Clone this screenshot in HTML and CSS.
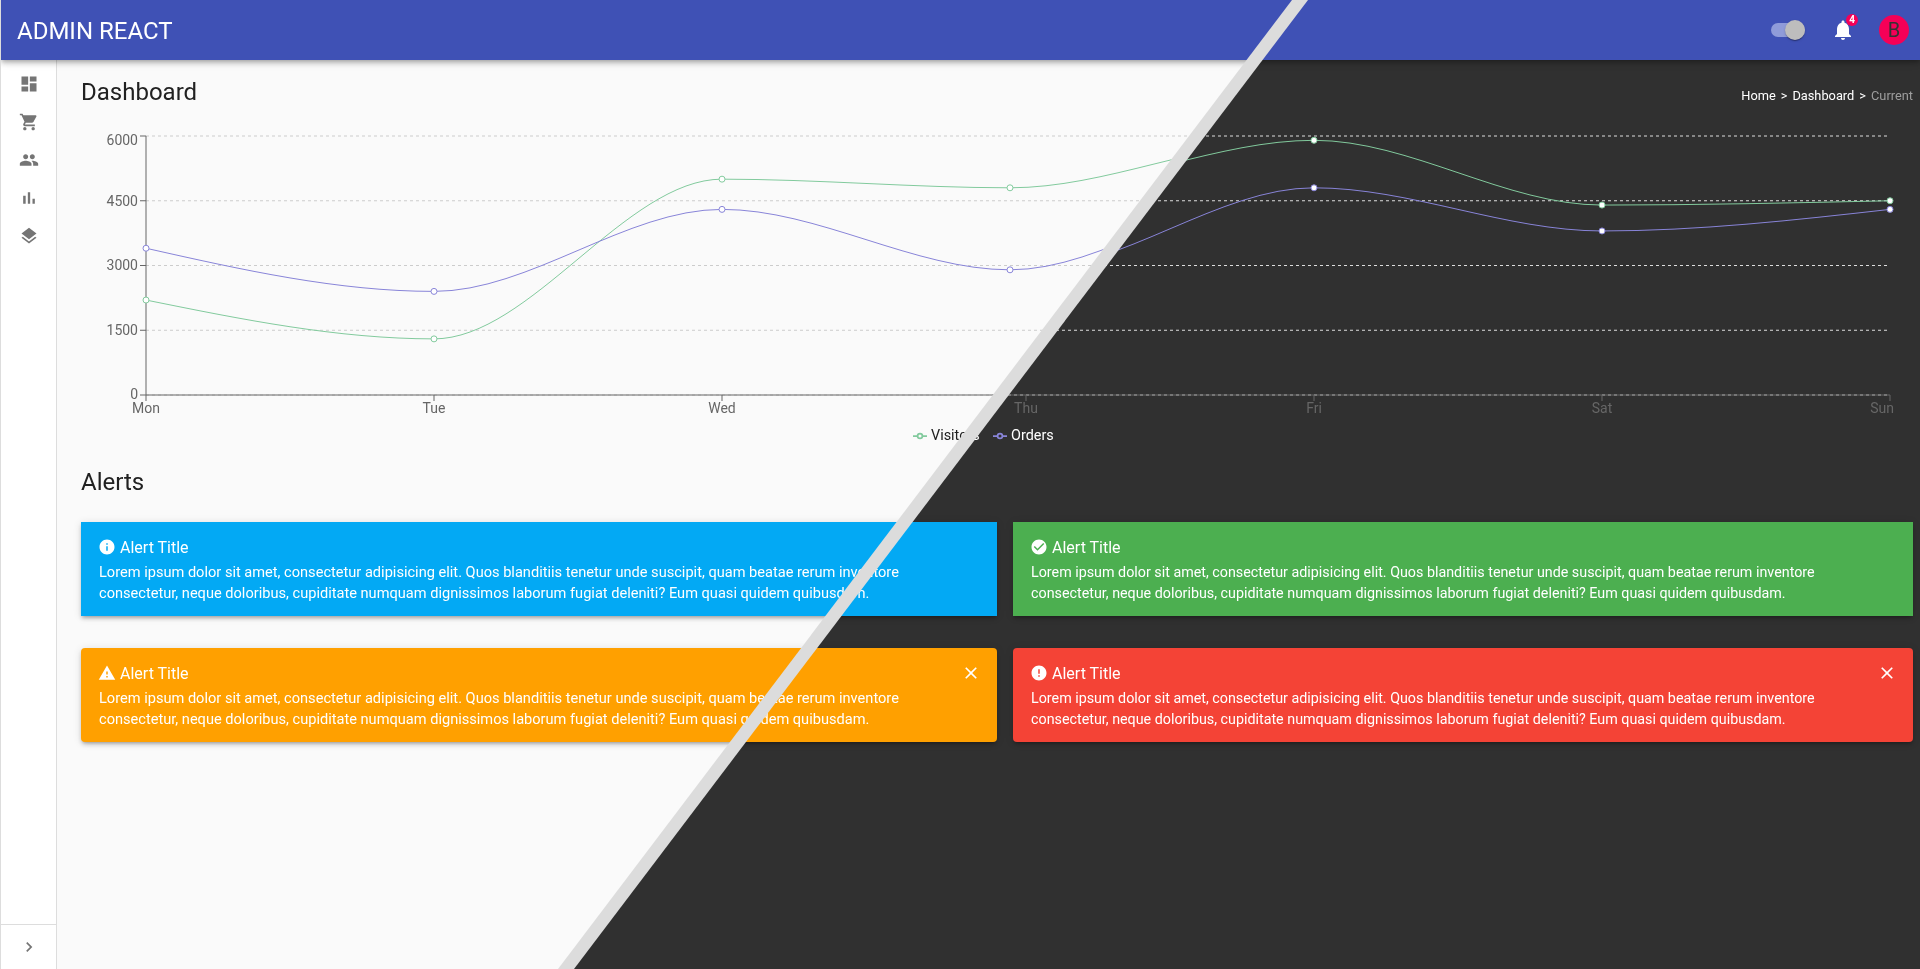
FILE: index.html
```html
<!DOCTYPE html>
<html lang="en">
<head>
  <meta charset="UTF-8" />
  <meta name="viewport" content="width=device-width, initial-scale=1.0" />
  <title>Admin React</title>
  <link rel="stylesheet" href="styles.css">
</head>
<body>
  <div class="app">
    <header class="topbar">
      <div class="brand">ADMIN REACT</div>
      <div class="topbar-actions">
        <div class="theme-switch"><span class="switch-track"></span><span class="switch-thumb"></span></div>
        <div class="bell">
          <svg class="icon-24" viewBox="0 0 24 24"><path d="M12 22c1.1 0 2-.9 2-2h-4c0 1.1.89 2 2 2zm6-6v-5c0-3.07-1.64-5.64-4.5-6.32V4c0-.83-.67-1.5-1.5-1.5s-1.5.67-1.5 1.5v.68C7.63 5.36 6 7.92 6 11v5l-2 2v1h16v-1l-2-2z"/></svg>
          <span class="bell-badge">4</span>
        </div>
        <div class="avatar">B</div>
      </div>
    </header>

    <nav class="sidebar">
      <ul class="side-menu">
        <li><svg class="icon-20" viewBox="0 0 24 24"><path d="M3 13h8V3H3v10zm0 8h8v-6H3v6zm10 0h8V11h-8v10zm0-18v6h8V3h-8z"/></svg></li>
        <li><svg class="icon-20" viewBox="0 0 24 24"><path d="M7 18c-1.1 0-1.99.9-1.99 2S5.9 22 7 22s2-.9 2-2-.9-2-2-2zM1 2v2h2l3.6 7.59-1.35 2.45c-.16.28-.25.61-.25.96 0 1.1.9 2 2 2h12v-2H7.42c-.14 0-.25-.11-.25-.25l.03-.12.9-1.63h7.45c.75 0 1.41-.41 1.75-1.03l3.58-6.49c.08-.14.12-.31.12-.48 0-.55-.45-1-1-1H5.21l-.94-2H1zm16 16c-1.1 0-1.99.9-1.99 2s.89 2 1.99 2 2-.9 2-2-.9-2-2-2z"/></svg></li>
        <li><svg class="icon-20" viewBox="0 0 24 24"><path d="M16 11c1.66 0 2.99-1.34 2.99-3S17.66 5 16 5c-1.66 0-3 1.34-3 3s1.34 3 3 3zm-8 0c1.66 0 2.99-1.34 2.99-3S9.66 5 8 5C6.34 5 5 6.34 5 8s1.34 3 3 3zm0 2c-2.33 0-7 1.17-7 3.5V19h14v-2.5c0-2.33-4.67-3.5-7-3.5zm8 0c-.29 0-.62.02-.97.05 1.16.84 1.97 1.97 1.97 3.45V19h6v-2.5c0-2.33-4.67-3.5-7-3.5z"/></svg></li>
        <li><svg class="icon-20" viewBox="0 0 24 24"><path d="M5 9.2h3V19H5zM10.6 5h2.8v14h-2.8zm5.6 8H19v6h-2.8z"/></svg></li>
        <li><svg class="icon-20" viewBox="0 0 24 24"><path d="M11.99 18.54l-7.37-5.73L3 14.07l9 7 9-7-1.63-1.27-7.38 5.74zM12 16l7.36-5.73L21 9l-9-7-9 7 1.63 1.27L12 16z"/></svg></li>
      </ul>
      <div class="side-footer">
        <svg class="icon-20" viewBox="0 0 24 24"><path d="M10 6L8.59 7.41 13.17 12l-4.58 4.59L10 18l6-6z"/></svg>
      </div>
    </nav>

    <main class="content">
      <div class="page-head">
        <h2 class="section-title">Dashboard</h2>
        <div class="breadcrumbs">
          <span>Home</span><span class="crumb-sep">&gt;</span><span>Dashboard</span><span class="crumb-sep">&gt;</span><span class="crumb-current">Current</span>
        </div>
      </div>

      <svg id="chart" class="chart" viewBox="81 120 1832 340">
        <defs>
          <clipPath id="clipLight"><polygon points="0,0 1300,0 566,969 0,969"/></clipPath>
          <clipPath id="clipDark"><polygon points="1300,0 1920,0 1920,969 566,969"/></clipPath>
        </defs>
      </svg>

      <h2 class="section-title alerts-title">Alerts</h2>
      <div class="alert-grid">
        <div class="alert alert-info square">
          <div class="alert-title">
            <svg class="icon-18" viewBox="0 0 24 24"><path d="M12 2C6.48 2 2 6.48 2 12s4.48 10 10 10 10-4.48 10-10S17.52 2 12 2zm1 15h-2v-6h2v6zm0-8h-2V7h2v2z"/></svg>
            <span>Alert Title</span>
          </div>
          <p>Lorem ipsum dolor sit amet, consectetur adipisicing elit. Quos blanditiis tenetur unde suscipit, quam beatae rerum inventore consectetur, neque doloribus, cupiditate numquam dignissimos laborum fugiat deleniti? Eum quasi quidem quibusdam.</p>
        </div>
        <div class="alert alert-success square">
          <div class="alert-title">
            <svg class="icon-18" viewBox="0 0 24 24"><path d="M12 2C6.48 2 2 6.48 2 12s4.48 10 10 10 10-4.48 10-10S17.52 2 12 2zm-2 15l-5-5 1.41-1.41L10 14.17l7.59-7.59L19 8l-9 9z"/></svg>
            <span>Alert Title</span>
          </div>
          <p>Lorem ipsum dolor sit amet, consectetur adipisicing elit. Quos blanditiis tenetur unde suscipit, quam beatae rerum inventore consectetur, neque doloribus, cupiditate numquam dignissimos laborum fugiat deleniti? Eum quasi quidem quibusdam.</p>
        </div>
        <div class="alert alert-warning">
          <div class="alert-title">
            <svg class="icon-18" viewBox="0 0 24 24"><path d="M1 21h22L12 2 1 21zm12-3h-2v-2h2v2zm0-4h-2v-4h2v4z"/></svg>
            <span>Alert Title</span>
            <svg class="icon-20 alert-close" viewBox="0 0 24 24"><path d="M19 6.41L17.59 5 12 10.59 6.41 5 5 6.41 10.59 12 5 17.59 6.41 19 12 13.41 17.59 19 19 17.59 13.41 12z"/></svg>
          </div>
          <p>Lorem ipsum dolor sit amet, consectetur adipisicing elit. Quos blanditiis tenetur unde suscipit, quam beatae rerum inventore consectetur, neque doloribus, cupiditate numquam dignissimos laborum fugiat deleniti? Eum quasi quidem quibusdam.</p>
        </div>
        <div class="alert alert-error">
          <div class="alert-title">
            <svg class="icon-18" viewBox="0 0 24 24"><path d="M12 2C6.48 2 2 6.48 2 12s4.48 10 10 10 10-4.48 10-10S17.52 2 12 2zm1 15h-2v-2h2v2zm0-4h-2V7h2v6z"/></svg>
            <span>Alert Title</span>
            <svg class="icon-20 alert-close" viewBox="0 0 24 24"><path d="M19 6.41L17.59 5 12 10.59 6.41 5 5 6.41 10.59 12 5 17.59 6.41 19 12 13.41 17.59 19 19 17.59 13.41 12z"/></svg>
          </div>
          <p>Lorem ipsum dolor sit amet, consectetur adipisicing elit. Quos blanditiis tenetur unde suscipit, quam beatae rerum inventore consectetur, neque doloribus, cupiditate numquam dignissimos laborum fugiat deleniti? Eum quasi quidem quibusdam.</p>
        </div>
      </div>
    </main>
  </div>
  <script src="chart.js"></script>
</body>
</html>
```

FILE: styles.css
```css
* { box-sizing: border-box; }
html, body { height: 100%; }
body { margin: 0; background: #fafafa; border-left: 1px solid #ddd; font-family: Roboto, "Liberation Sans", sans-serif; color: #212121; overflow: hidden; }

.app { display: grid; grid-template-columns: 56px 1fr; grid-template-rows: 60px 1fr; height: 100vh; }

/* dark half of the page and the diagonal band between the two themes */
.app::before { content: ""; position: fixed; inset: 0; background: #303030; clip-path: polygon(1300px 0, 100% 0, 100% 100%, 566px 100%); }
.app::after { content: ""; position: fixed; inset: 0; z-index: 10; background: #dcdcdc; pointer-events: none; clip-path: polygon(1292px 0, 1308px 0, 574px 100%, 558px 100%); }

.topbar { grid-column: 1 / 3; display: flex; align-items: center; justify-content: space-between; padding: 0 0 0 16px; background: #3f51b5; color: #fff; box-shadow: 0 2px 4px -1px rgba(0,0,0,.2), 0 4px 5px 0 rgba(0,0,0,.14), 0 1px 10px 0 rgba(0,0,0,.12); position: relative; z-index: 2; }
.brand { font-size: 24px; padding-top: 2px; }
.topbar-actions { display: flex; align-items: center; padding-right: 11px; }

.theme-switch { position: relative; width: 34px; height: 20px; margin-right: 26px; }
.switch-track { display: block; width: 34px; height: 14px; margin-top: 3px; border-radius: 7px; background: #8f9bd9; }
.switch-thumb { position: absolute; top: 0; right: 0; width: 20px; height: 20px; border-radius: 50%; background: #bdbdbd; box-shadow: 0 2px 1px -1px rgba(0,0,0,.2), 0 1px 1px 0 rgba(0,0,0,.14), 0 1px 3px 0 rgba(0,0,0,.12); }

.bell { position: relative; width: 24px; height: 24px; margin-right: 24px; }
.bell-badge { position: absolute; top: -4px; left: 15px; width: 12px; height: 12px; border-radius: 50%; background: #f50057; color: #fff; font-size: 10px; font-weight: 700; line-height: 12px; text-align: center; }
.avatar { width: 30px; height: 30px; border-radius: 50%; background: #f50057; color: #333; font-size: 20px; line-height: 30px; text-align: center; }

.icon-24 { display: block; width: 24px; height: 24px; fill: #fff; }
.icon-20 { display: block; width: 20px; height: 20px; fill: #757575; }
.icon-18 { display: block; width: 18px; height: 18px; fill: #fff; flex: none; }

.sidebar { display: flex; flex-direction: column; justify-content: space-between; background: #fff; border-right: 1px solid #ddd; position: relative; z-index: 1; }
.side-menu { list-style: none; margin: 0; padding: 5px 0 0; }
.side-menu li { display: flex; align-items: center; justify-content: center; height: 38px; }
.side-footer { display: flex; align-items: center; justify-content: center; height: 45px; border-top: 1px solid #ddd; }

.content { padding: 18px 7px 0 24px; position: relative; z-index: 1; min-width: 0; }
.page-head { display: flex; align-items: baseline; justify-content: space-between; }
.section-title { margin: 0; font-size: 24px; font-weight: 400; line-height: 28px; color: #212121; }
.breadcrumbs { display: flex; font-size: 12.8px; color: #fff; }
.crumb-sep { margin: 0 5px; }
.crumb-current { color: #9e9e9e; }

.chart { display: block; width: 1832px; height: 340px; margin-top: 14px; }
.chart text { font-family: Roboto, "Liberation Sans", sans-serif; font-size: 14px; fill: #666; }
.chart .grid-line { stroke: #ccc; stroke-dasharray: 3 3; fill: none; }
.chart .axis-line { stroke: #666; fill: none; }
.chart .curve { fill: none; stroke-width: 1; }
.chart .dot { fill: #fff; stroke-width: 1; }
.chart .legend-mark { stroke-width: 1.75; }
.chart .series-visitors { stroke: #82ca9d; }
.chart .series-orders { stroke: #8884d8; }
.chart .legend-text { font-size: 14.4px; }
.chart .theme-light .legend-text { fill: #212121; }
.chart .theme-light .legend-mark circle { fill: #fafafa; }
.chart .theme-dark .grid-line { stroke: #ddd; }
.chart .theme-dark .legend-text { fill: #fff; }
.chart .theme-dark .legend-mark circle { fill: #303030; }

.alerts-title { margin-top: 8px; }
.alert-grid { display: grid; grid-template-columns: 916px 900px; column-gap: 16px; row-gap: 32px; margin-top: 26px; }
.alert { height: 94px; padding: 13px 18px 0 17px; border-radius: 4px; color: #fff; box-shadow: 0 3px 3px -2px rgba(0,0,0,.2), 0 3px 4px 0 rgba(0,0,0,.14), 0 1px 8px 0 rgba(0,0,0,.12); }
.alert.square { border-radius: 0; }
.alert p { margin: 3px 0 0 1px; font-size: 14.6px; line-height: 21px; }
.alert-success p, .alert-error p { font-size: 14.3px; }
.alert-title { display: flex; align-items: center; height: 24px; font-size: 16px; }
.alert-title span { margin-left: 4px; }
.alert-close { margin-left: auto; margin-right: -2px; fill: #fff; }
.alert-info { background: #03a9f4; }
.alert-success { background: #4caf50; }
.alert-warning { background: #ffa000; }
.alert-error { background: #f44336; }
```

FILE: chart.js
```js
// the same chart is drawn twice, one per theme, each clipped to its side of the band
const NS = 'http://www.w3.org/2000/svg';
const days = ['Mon', 'Tue', 'Wed', 'Thu', 'Fri', 'Sat', 'Sun'];
const ticks = [6000, 4500, 3000, 1500, 0];
const series = [
  { name: 'visitors', values: [2200, 1300, 5000, 4800, 5900, 4400, 4500] },
  { name: 'orders', values: [3400, 2400, 4300, 2900, 4800, 3800, 4300] }
];
const STEP = 288;
const TOP = 136;
const BOTTOM = 395;
const svg = document.getElementById('chart');

const toY = v => BOTTOM - v * (BOTTOM - TOP) / 6000;

function add(parent, tag, attrs, text) {
  const el = document.createElementNS(NS, tag);
  for (const k in attrs) el.setAttribute(k, attrs[k]);
  if (text !== undefined) el.textContent = text;
  parent.appendChild(el);
  return el;
}

// monotone cubic, same tangents as recharts type="monotone"
function curvePath(xs, ys) {
  const n = xs.length;
  const s = [];
  for (let i = 0; i < n - 1; i++) s.push((ys[i + 1] - ys[i]) / STEP);
  const m = [];
  for (let i = 1; i < n - 1; i++) {
    const sign = Math.sign(s[i - 1]) + Math.sign(s[i]);
    m[i] = sign * Math.min(Math.abs(s[i - 1]), Math.abs(s[i]), Math.abs(s[i - 1] + s[i]) / 4) || 0;
  }
  m[0] = (3 * s[0] - m[1]) / 2;
  m[n - 1] = (3 * s[n - 2] - m[n - 2]) / 2;
  let d = `M${xs[0]},${ys[0]}`;
  const h = STEP / 3;
  for (let i = 0; i < n - 1; i++) {
    d += `C${xs[i] + h},${ys[i] + h * m[i]} ${xs[i + 1] - h},${ys[i + 1] - h * m[i + 1]} ${xs[i + 1]},${ys[i + 1]}`;
  }
  return d;
}

// opts.yAxis: this side shows the y axis; opts.from/opts.to: day labels visible on this side
function drawChart(theme, clip, left, opts) {
  const g = add(svg, 'g', { class: 'theme-' + theme, 'clip-path': `url(#${clip})` });
  const xs = days.map((_, i) => left + i * STEP);
  const right = xs[xs.length - 1];

  // grid
  ticks.forEach(v => {
    add(g, 'line', { class: 'grid-line', x1: left, x2: right, y1: toY(v), y2: toY(v) });
  });

  // axes
  add(g, 'line', { class: 'axis-line', x1: left, x2: right, y1: BOTTOM, y2: BOTTOM });
  if (opts.yAxis) {
    add(g, 'line', { class: 'axis-line', x1: left, x2: left, y1: TOP, y2: BOTTOM });
    ticks.forEach(v => {
      add(g, 'line', { class: 'axis-line', x1: left - 6, x2: left, y1: toY(v), y2: toY(v) });
      const shift = v === 6000 ? 4 : v === 0 ? -1 : 0;
      add(g, 'text', { x: left - 8, y: toY(v) + shift, dy: '.355em', 'text-anchor': 'end' }, v);
    });
  }
  days.forEach((day, i) => {
    add(g, 'line', { class: 'axis-line', x1: xs[i], x2: xs[i], y1: BOTTOM, y2: BOTTOM + 6 });
    if (i < opts.from || i > opts.to) return;
    const last = i === days.length - 1;
    add(g, 'text', { x: last ? xs[i] + 4 : xs[i], y: 408, dy: '.355em', 'text-anchor': last ? 'end' : 'middle' }, day);
  });

  // series
  series.forEach(item => {
    const ys = item.values.map(toY);
    add(g, 'path', { class: 'curve series-' + item.name, d: curvePath(xs, ys) });
    xs.forEach((x, i) => add(g, 'circle', { class: 'dot series-' + item.name, cx: x, cy: ys[i], r: 3 }));
  });

  // legend
  opts.legend.forEach(([name, label, x]) => {
    const mark = add(g, 'g', { class: 'legend-mark series-' + name });
    add(mark, 'line', { x1: x, x2: x + 14, y1: 436, y2: 436 });
    add(mark, 'circle', { cx: x + 7, cy: 436, r: 2.4 });
    add(g, 'text', { class: 'legend-text', x: x + 18, y: 435, dy: '.355em' }, label);
  });
}

const visitorsKey = ['visitors', 'Visitors', 913];
const ordersKey = ['orders', 'Orders', 993];
drawChart('dark', 'clipDark', 162, { yAxis: false, from: 3, to: 6, legend: [visitorsKey, ordersKey] });
drawChart('light', 'clipLight', 146, { yAxis: true, from: 0, to: 2, legend: [visitorsKey] });
```
